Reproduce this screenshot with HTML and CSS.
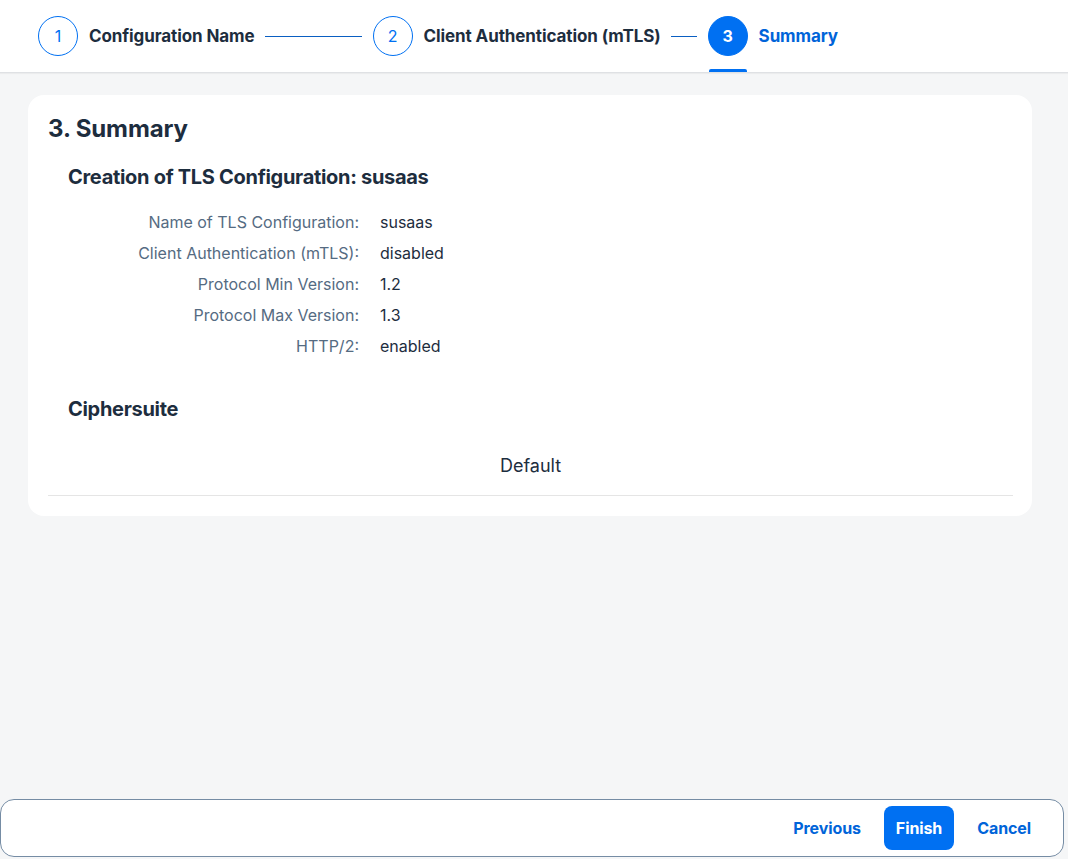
FILE: index.html
```html
<!DOCTYPE html>
<html lang="en">
<head>
<meta charset="utf-8">
<title>TLS Configuration Wizard</title>
<link rel="stylesheet" href="styles.css">
</head>
<body>
<div class="page">
  <header class="wizard-header">
    <nav class="steps">
      <div class="step">
        <span class="step-circle">1</span>
        <span class="step-label">Configuration Name</span>
      </div>
      <span class="connector connector-long"></span>
      <div class="step">
        <span class="step-circle">2</span>
        <span class="step-label">Client Authentication (mTLS)</span>
      </div>
      <span class="connector connector-short"></span>
      <div class="step step-active">
        <span class="step-circle">3</span>
        <span class="step-label">Summary</span>
      </div>
    </nav>
  </header>

  <main class="content">
    <section class="card">
      <h1 class="card-title">3. Summary</h1>
      <h2 class="section-title">Creation of TLS Configuration: susaas</h2>
      <dl class="form">
        <dt>Name of TLS Configuration:</dt><dd>susaas</dd>
        <dt>Client Authentication (mTLS):</dt><dd>disabled</dd>
        <dt>Protocol Min Version:</dt><dd>1.2</dd>
        <dt>Protocol Max Version:</dt><dd>1.3</dd>
        <dt>HTTP/2:</dt><dd>enabled</dd>
      </dl>
      <h2 class="section-title section-gap">Ciphersuite</h2>
      <div class="cipher-table">
        <div class="cipher-row">Default</div>
      </div>
    </section>
  </main>

  <footer class="wizard-footer">
    <button class="btn btn-ghost">Previous</button>
    <button class="btn btn-primary">Finish</button>
    <button class="btn btn-ghost">Cancel</button>
  </footer>
</div>
</body>
</html>
```

FILE: styles.css
```css
* {
  box-sizing: border-box;
}

html, body {
  margin: 0;
  padding: 0;
}

body {
  background: #f5f6f7;
  font-family: Inter, "Noto Sans", "Liberation Sans", sans-serif;
  color: #1d2d3e;
  font-size: 16px;
}

.page {
  height: 859px;
  display: flex;
  flex-direction: column;
}

.wizard-header {
  height: 73px;
  background: #ffffff;
  border-bottom: 1px solid #dfe1e4;
  box-shadow: 0 1px 1px rgba(0, 0, 0, 0.04);
  padding-left: 38px;
  display: flex;
  align-items: center;
  flex-shrink: 0;
}

.steps {
  display: flex;
  align-items: center;
  height: 100%;
}

.step {
  display: flex;
  align-items: center;
  gap: 11px;
  height: 100%;
  position: relative;
}

.step-circle {
  width: 40px;
  height: 40px;
  border-radius: 50%;
  border: 1px solid #0070f2;
  color: #0070f2;
  display: flex;
  align-items: center;
  justify-content: center;
  font-size: 16px;
  font-weight: 400;
}

.step-label {
  font-weight: 700;
  font-size: 17px;
  letter-spacing: -0.1px;
  color: #1d2d3e;
}

.connector {
  height: 1px;
  background: #0a5fc2;
  margin: 0 11px 0 10px;
}

.connector-long {
  width: 97px;
}

.connector-short {
  width: 26px;
}

.step-active .step-circle {
  background: #0070f2;
  color: #ffffff;
  font-weight: 700;
}

.step-active .step-label {
  color: #0064d9;
}

.step-active::after {
  content: "";
  position: absolute;
  left: 1px;
  bottom: 0;
  width: 38px;
  height: 3px;
  background: #0070f2;
  border-radius: 2px 2px 0 0;
}

.content {
  flex: 1;
  padding: 22px 36px 0 28px;
}

.card {
  background: #ffffff;
  border-radius: 16px;
  padding: 16px 19px 20px 20px;
}

.card-title {
  margin: 0;
  font-size: 24px;
  line-height: 36px;
  font-weight: 700;
  letter-spacing: -0.1px;
}

.section-title {
  margin: 18px 0 0 20px;
  font-size: 20px;
  line-height: 24px;
  font-weight: 700;
  letter-spacing: -0.3px;
}

.form {
  display: grid;
  grid-template-columns: 291px 1fr;
  column-gap: 21px;
  margin: 18px 0 0 20px;
  line-height: 31px;
}

.form dt {
  text-align: right;
  color: #556b82;
  margin: 0;
}

.form dd {
  margin: 0;
  color: #1d2d3e;
}

.section-gap {
  margin-top: 35px;
}

.cipher-table {
  padding-top: 29px;
  padding-bottom: 13px;
  border-bottom: 1px solid #e5e5e5;
}

.cipher-row {
  text-align: center;
  font-size: 18px;
  line-height: 32px;
}

.wizard-footer {
  height: 58px;
  width: 1064px;
  margin-bottom: 2px;
  background: #ffffff;
  border: 1px solid #758ca4;
  border-radius: 14px;
  display: flex;
  align-items: center;
  justify-content: flex-end;
  gap: 11px;
  padding-right: 20px;
  flex-shrink: 0;
}

.btn {
  font-family: inherit;
  font-size: 16px;
  font-weight: 700;
  height: 44px;
  padding: 0 12px;
  border: none;
  border-radius: 8px;
  cursor: pointer;
  letter-spacing: -0.1px;
}

.btn-ghost {
  background: transparent;
  color: #0064d9;
}

.btn-primary {
  background: #0070f2;
  color: #ffffff;
}
```
